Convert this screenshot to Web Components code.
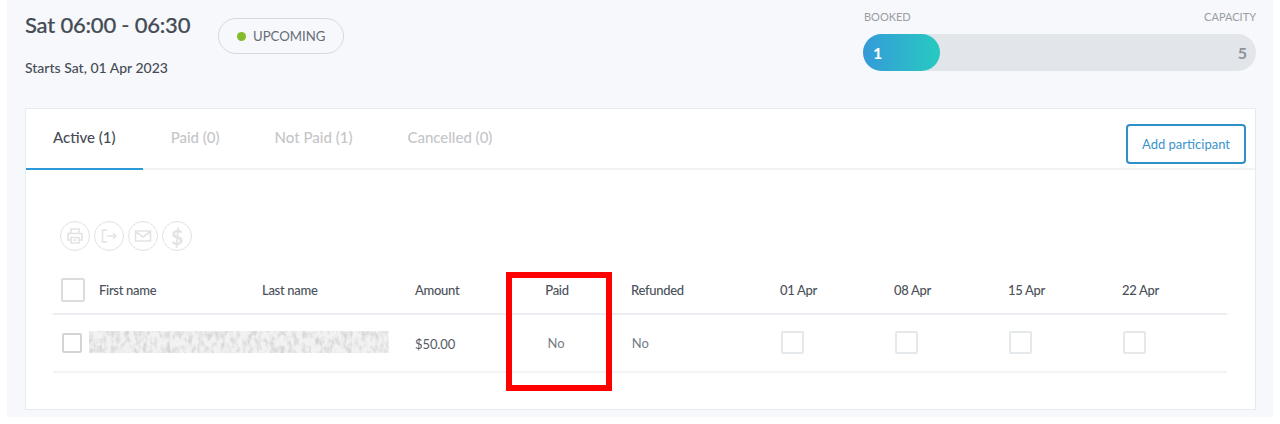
<!DOCTYPE html>
<html>
<head>
<meta charset="utf-8">
<style>
    html, body { margin: 0; padding: 0; background: #fff; }
    body { font-family: Lato, "Liberation Sans", sans-serif; color: #454c55; height: 424px; overflow: hidden; }
</style>
</head>
<body>
<session-page>
    <session-title slot="left" heading="Sat 06:00 - 06:30" status="UPCOMING" starts="Starts Sat, 01 Apr 2023"></session-title>
    <capacity-bar slot="right" booked="1" capacity="5"></capacity-bar>
    <participants-card slot="card"></participants-card>
</session-page>

<script>
// little helper so each component only declares its css + markup
function shadow(el, html) {
    el.attachShadow({ mode: 'open' });
    el.shadowRoot.innerHTML = html;
}

const MEDIUM = '"Lato Medium", Lato, "Liberation Sans", sans-serif';

class SessionPage extends HTMLElement {
    constructor() {
        super();
        shadow(this, `
        <style>
            :host { display: block; position: relative; margin: 0 7px; height: 417px; background: #f6f8fc; box-sizing: border-box; padding: 0 17px 0 18px; }
            .top { display: flex; justify-content: space-between; height: 108px; }
        </style>
        <div class="top"><slot name="left"></slot><slot name="right"></slot></div>
        <slot name="card"></slot>`);
    }
}

class SessionTitle extends HTMLElement {
    constructor() {
        super();
        shadow(this, `
        <style>
            :host { display: block; padding-top: 11px; }
            .row { display: flex; align-items: flex-start; }
            h1 { margin: 0; width: 166px; white-space: nowrap; font: 500 22px/27px ${MEDIUM}; letter-spacing: -0.2px; color: #454c55; -webkit-text-stroke: 0.2px #454c55; }
            .pill { display: flex; align-items: center; box-sizing: border-box; width: 126px; height: 36px; margin: 7px 0 0 27px; padding: 0 18px; border: 1px solid #d5d8dc; border-radius: 18px; font-size: 13.200px; color: #666d75; white-space: nowrap; }
            .dot { flex: none; width: 9px; height: 9px; border-radius: 50%; background: #85bb2d; margin-right: 7px; }
            p { margin: 5px 0 0; font: 500 14px/18px ${MEDIUM}; color: #454c55; }
        </style>
        <div class="row"><h1></h1><div class="pill"><span class="dot"></span><span class="status"></span></div></div>
        <p></p>`);
    }
    connectedCallback() {
        this.shadowRoot.querySelector('h1').textContent = this.getAttribute('heading');
        this.shadowRoot.querySelector('.status').textContent = this.getAttribute('status');
        this.shadowRoot.querySelector('p').textContent = this.getAttribute('starts');
    }
}

class CapacityBar extends HTMLElement {
    constructor() {
        super();
        shadow(this, `
        <style>
            :host { display: block; width: 393px; padding-top: 9px; box-sizing: border-box; }
            .labels { display: flex; justify-content: space-between; padding-left: 1px; font-size: 11px; line-height: 15px; color: #9a9da1; height: 16px; margin-bottom: 9px; }
            .track { display: flex; justify-content: space-between; align-items: center; height: 37px; border-radius: 19px; background: #e2e5e9; font-size: 16px; font-weight: 700; }
            .fill { box-sizing: border-box; width: 77px; height: 37px; line-height: 37px; padding-left: 10px; border-radius: 19px; color: #fff; background: linear-gradient(90deg, #359ad9, #28cac1); }
            .cap { color: #8f9296; padding-right: 9px; }
        </style>
        <div class="labels"><span>BOOKED</span><span>CAPACITY</span></div>
        <div class="track"><div class="fill"></div><div class="cap"></div></div>`);
    }
    connectedCallback() {
        this.shadowRoot.querySelector('.fill').textContent = this.getAttribute('booked');
        this.shadowRoot.querySelector('.cap').textContent = this.getAttribute('capacity');
    }
}

class TabBar extends HTMLElement {
    constructor() {
        super();
        shadow(this, `
        <style>
            :host { display: flex; justify-content: space-between; box-sizing: border-box; height: 61px; border-bottom: 2px solid #f1f2f4; }
            .tabs { display: flex; gap: 1px; height: 61px; }
            .tab { box-sizing: border-box; height: 61px; padding: 19px 27px 0; font: 500 15px/18px ${MEDIUM}; color: #c4c6c9; }
            .tab.on { color: #454c55; border-bottom: 2px solid #2c9ad9; }
            button { box-sizing: border-box; width: 120px; height: 40px; margin: 15px 9px 0 0; border: 2px solid #2f8fc8; border-radius: 4px; background: #fff; color: #3a94cc; font: 13px Lato, "Liberation Sans", sans-serif; padding: 0; }
        </style>
        <div class="tabs">
            <div class="tab on">Active (1)</div>
            <div class="tab">Paid (0)</div>
            <div class="tab">Not Paid (1)</div>
            <div class="tab">Cancelled (0)</div>
        </div>
        <button>Add participant</button>`);
    }
}

class ActionIcons extends HTMLElement {
    constructor() {
        super();
        const s = 'fill="none" stroke="#e3e3e3" stroke-width="1.6"';
        shadow(this, `
        <style>
            :host { display: flex; gap: 4px; }
            .ic { box-sizing: border-box; width: 30px; height: 30px; border: 1px solid #e2e2e2; border-radius: 50%; display: flex; align-items: center; justify-content: center; }
            .usd { font-size: 21px; font-weight: 700; color: #e3e3e3; line-height: 1; }
        </style>
        <div class="ic"><svg width="18" height="18" viewBox="0 0 18 18" ${s}><path d="M5 6V2h8v4M5 13H2V6.500h14V13h-3"/><path d="M5 10.500h8V16H5z"/><path d="M7.500 13h3"/></svg></div>
        <div class="ic"><svg width="18" height="18" viewBox="0 0 18 18" ${s}><path d="M7 3H2.500v12H7M7 9h9M13 6l3 3-3 3"/></svg></div>
        <div class="ic"><svg width="18" height="18" viewBox="0 0 18 18" ${s}><path d="M1.500 4h15v10h-15zM1.500 4.500l7.500 5.500 7.500-5.500"/></svg></div>
        <div class="ic"><span class="usd">$</span></div>`);
    }
}

class CheckBox extends HTMLElement {
    constructor() {
        super();
        shadow(this, `
        <style>
            :host { display: block; box-sizing: border-box; width: var(--size, 23px); height: var(--size, 23px); background: #fff; border: 2px solid var(--edge, #e6e9ec); border-radius: 2px; }
        </style>`);
    }
}

class BlurredName extends HTMLElement {
    constructor() {
        super();
        shadow(this, `
        <style>
            :host { display: block; width: 300px; height: 22px; overflow: hidden; background: #e6e6e6; }
            svg { display: block; }
        </style>
        <svg width="300" height="22">
            <filter id="n" x="0" y="0" width="100%" height="100%">
                <feTurbulence type="fractalNoise" baseFrequency="0.22 0.13" numOctaves="3" seed="23"/>
                <feColorMatrix values="0 0 0 0 0.65  0 0 0 0 0.65  0 0 0 0 0.65  2.4 0 0 0 -1"/>
            </filter>
            <rect width="300" height="22" fill="#f2f2f2"/>
            <rect width="300" height="22" filter="url(#n)"/>
        </svg>`);
    }
}

class ParticipantsTable extends HTMLElement {
    constructor() {
        super();
        shadow(this, `
        <style>
            :host { display: block; margin: 0 28px 0 27px; }
            .row { display: grid; grid-template-columns: 46px 163px 153px 91px 102px 149px 114px 114px 114px 1fr; align-items: center; }
            .head { height: 44px; border-bottom: 2px solid #ebedf2; font: 500 13px ${MEDIUM}; letter-spacing: -0.3px; color: #4a515a; }
            .head > * { margin-top: -2px; }
            .body { height: 56px; border-bottom: 2px solid #f3f4f6; font-size: 13px; color: #767c84; }
            .pad { padding-left: 23px; }
            .wide { padding-left: 24px; }
            .mid { text-align: center; }
            .head check-box { --size: 24px; --edge: #dcdcdc; margin-left: 8px; }
            .body .sel { --size: 20px; --edge: #d4d4d4; margin-left: 9px; }
            .person { grid-column: 1 / span 3; display: flex; align-items: center; gap: 7px; }
            blurred-name { margin-top: -2px; }
            .amount { color: #555b63; letter-spacing: -0.1px; margin-top: 2px; }
            .body .wide check-box { margin-top: -2px; }
            .body .mid { padding-right: 2px; }
            .body .mid, .body .no { margin-top: -1px; }
        </style>
        <div class="row head">
            <check-box></check-box><div>First name</div><div>Last name</div><div>Amount</div><div class="mid">Paid</div>
            <div class="pad">Refunded</div><div class="pad">01 Apr</div><div class="pad">08 Apr</div><div class="pad">15 Apr</div><div class="pad">22 Apr</div>
        </div>
        <div class="row body">
            <div class="person"><check-box class="sel"></check-box><blurred-name></blurred-name></div>
            <div class="amount">$50.00</div><div class="mid">No</div><div class="pad no">&#8202;No</div>
            <div class="wide"><check-box></check-box></div><div class="wide"><check-box></check-box></div><div class="wide"><check-box></check-box></div><div class="wide"><check-box></check-box></div>
        </div>`);
    }
}

class ParticipantsCard extends HTMLElement {
    constructor() {
        super();
        shadow(this, `
        <style>
            :host { display: block; box-sizing: border-box; height: 302px; background: #fff; border: 1px solid #e7eaee; }
            action-icons { margin: 51px 0 18px 34px; }
            .hl { position: absolute; left: 499px; top: 272px; width: 106px; height: 119px; box-sizing: border-box; border: 6px solid #fe0000; }
        </style>
        <tab-bar></tab-bar>
        <action-icons></action-icons>
        <participants-table></participants-table>
        <div class="hl"></div>`);
    }
}

customElements.define('session-page', SessionPage);
customElements.define('session-title', SessionTitle);
customElements.define('capacity-bar', CapacityBar);
customElements.define('tab-bar', TabBar);
customElements.define('action-icons', ActionIcons);
customElements.define('check-box', CheckBox);
customElements.define('blurred-name', BlurredName);
customElements.define('participants-table', ParticipantsTable);
customElements.define('participants-card', ParticipantsCard);
</script>
</body>
</html>
